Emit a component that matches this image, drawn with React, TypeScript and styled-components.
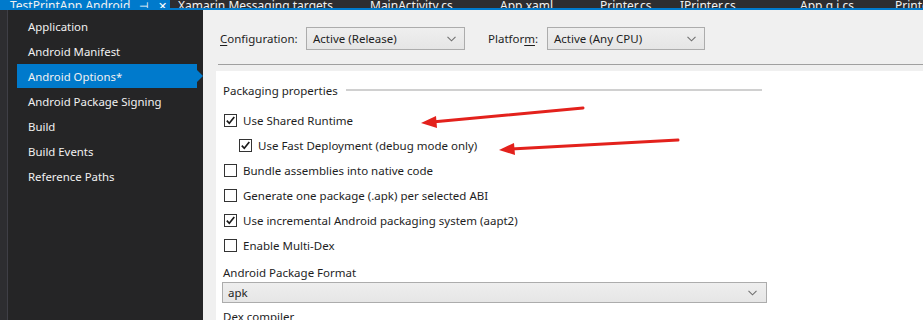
import React from "react";
import styled, { createGlobalStyle } from "styled-components";

const GlobalStyle = createGlobalStyle`
  html, body { margin: 0; padding: 0; background: #f0f0f0; }
  * { box-sizing: border-box; }
`;

const FONT = `"Segoe UI", "Noto Sans", "Open Sans", sans-serif`;

const Root = styled.div`
  position: relative;
  width: 923px;
  height: 320px;
  overflow: hidden;
  display: flex;
  flex-direction: column;
  font-family: ${FONT};
  font-size: 11.5px;
`;

const TabBar = styled.div`
  height: 8px;
  flex: none;
  background: #2d2d30;
  display: flex;
  align-items: flex-end;
  overflow: hidden;
`;

const Tab = styled.div<{ $active?: boolean; $w: number }>`
  flex: none;
  width: ${(p) => p.$w}px;
  height: 20px;
  display: flex;
  align-items: center;
  padding: 0 0 0 ${(p) => (p.$active ? 10 : 8)}px;
  color: #f1f1f1;
  background: ${(p) => (p.$active ? "#007acc" : "transparent")};
  font-size: 12px;
  white-space: nowrap;
  margin-bottom: -7px;
`;

const TabTitle = styled.span`
  width: 129px;
  flex: none;
`;

const TabIcon = styled.span`
  font-size: 11px;
  width: 19px;
  flex: none;
  color: #ffffff;
`;

const AccentLine = styled.div`
  height: 2px;
  flex: none;
  background: #007acc;
`;

const Body = styled.div`
  flex: 1;
  display: flex;
  min-height: 0;
`;

const Strip = styled.div`
  width: 8px;
  flex: none;
  background: #2d2d30;
  border-right: 1px solid #3f3f46;
`;

const Sidebar = styled.div`
  width: 195px;
  flex: none;
  background: #252526;
  padding-top: 4px;
  display: flex;
  flex-direction: column;
`;

const NavItem = styled.div<{ $selected?: boolean }>`
  position: relative;
  height: 25px;
  margin-left: 9px;
  width: 180px;
  padding-left: 11px;
  display: flex;
  align-items: center;
  color: #f1f1f1;
  font-size: 11.4px;
  background: ${(p) => (p.$selected ? "#007acc" : "transparent")};
  border-bottom: ${(p) => (p.$selected ? "1px solid #252526" : "none")};
  &::after {
    content: "";
    display: ${(p) => (p.$selected ? "block" : "none")};
    position: absolute;
    right: -6px;
    top: 6px;
    border-left: 6px solid #007acc;
    border-top: 6px solid transparent;
    border-bottom: 6px solid transparent;
  }
`;

const Content = styled.div`
  flex: 1;
  background: #f0f0f0;
  display: flex;
  flex-direction: column;
  min-width: 0;
`;

const ConfigRow = styled.div`
  display: flex;
  align-items: center;
  padding: 17px 0 0 17px;
  height: 40px;
  color: #1e1e1e;
`;

const ConfigLabel = styled.span<{ $w: number }>`
  width: ${(p) => p.$w}px;
  flex: none;
`;

const U = styled.span`
  text-decoration: underline;
  text-underline-offset: 2px;
`;

const Select = styled.div<{ $w: number; $h: number }>`
  width: ${(p) => p.$w}px;
  height: ${(p) => p.$h}px;
  flex: none;
  display: flex;
  align-items: center;
  justify-content: space-between;
  padding: 0 8px 0 6px;
  background: linear-gradient(#efefef, #e5e5e5);
  border: 1px solid #acacac;
  color: #1e1e1e;
`;

const Chevron = () => (
  <svg width="9" height="6" viewBox="0 0 9 6">
    <path d="M0.5 0.8 L4.5 4.8 L8.5 0.8" fill="none" stroke="#707070" strokeWidth="1.1" />
  </svg>
);

const Divider = styled.div`
  margin: 14px 0 0 15px;
  height: 1px;
  background: #a0a0a0;
  flex: none;
`;

const Panel = styled.div`
  margin: 6px 0 0 13px;
  flex: 1;
  background: #ffffff;
  padding: 10px 0 0 7px;
  color: #1e1e1e;
  display: flex;
  flex-direction: column;
`;

const GroupHeader = styled.div`
  display: flex;
  align-items: center;
  gap: 8px;
  height: 18px;
  width: 539px;
  margin-bottom: 9px;
  &::after {
    content: "";
    flex: 1;
    height: 2px;
    background: #d0d0d0;
  }
`;

const CheckRow = styled.div<{ $indent?: boolean }>`
  height: 25px;
  display: flex;
  align-items: center;
  gap: 6px;
  padding-left: ${(p) => (p.$indent ? 16 : 1)}px;
`;

const Box = styled.span`
  width: 13px;
  height: 13px;
  flex: none;
  border: 1px solid #333333;
  background: #ffffff;
  display: flex;
  align-items: center;
  justify-content: center;
`;

const Check = ({ checked }: { checked?: boolean }) => (
  <Box>
    {checked && (
      <svg width="11" height="11" viewBox="0 0 11 11">
        <path d="M1.8 5.6 L4.3 8.3 L9.3 2" fill="none" stroke="#1a1a1a" strokeWidth="1.7" />
      </svg>
    )}
  </Box>
);

const FieldLabel = styled.div<{ $top: number }>`
  height: 18px;
  display: flex;
  align-items: center;
  margin-top: ${(p) => p.$top}px;
`;

const FormatSelect = styled(Select)`
  margin: 1px 0 0 -1px;
  padding: 0 9px 0 5px;
  background: linear-gradient(#eeeeee, #e6e6e6);
`;

const Arrows = styled.svg`
  position: absolute;
  left: 0;
  top: 0;
  pointer-events: none;
`;

const tabs = [
  { t: "Xamarin.Messaging.targets", w: 192 },
  { t: "MainActivity.cs", w: 130 },
  { t: "App.xaml", w: 100 },
  { t: "Printer.cs", w: 80 },
  { t: "IPrinter.cs", w: 120 },
  { t: "App.g.i.cs", w: 95 },
  { t: "Printer", w: 60 },
];

const nav = [
  "Application",
  "Android Manifest",
  "Android Options*",
  "Android Package Signing",
  "Build",
  "Build Events",
  "Reference Paths",
];

const checks = [
  { t: "Use Shared Runtime", c: true },
  { t: "Use Fast Deployment (debug mode only)", c: true, i: true },
  { t: "Bundle assemblies into native code" },
  { t: "Generate one package (.apk) per selected ABI" },
  { t: "Use incremental Android packaging system (aapt2)", c: true },
  { t: "Enable Multi-Dex" },
];

export default function App() {
  return (
    <Root>
      <GlobalStyle />
      <TabBar>
        <Tab $active $w={170}>
          <TabTitle>TestPrintApp.Android</TabTitle>
          <TabIcon>⊣</TabIcon>
          <TabIcon>✕</TabIcon>
        </Tab>
        {tabs.map((x) => (
          <Tab key={x.t} $w={x.w}>
            {x.t}
          </Tab>
        ))}
      </TabBar>
      <AccentLine />
      <Body>
        <Strip />
        <Sidebar>
          {nav.map((n) => (
            <NavItem key={n} $selected={n === "Android Options*"}>
              {n}
            </NavItem>
          ))}
        </Sidebar>
        <Content>
          <ConfigRow>
            <ConfigLabel $w={86}>
              <U>C</U>onfiguration:
            </ConfigLabel>
            <Select $w={159} $h={23}>
              Active (Release)
              <Chevron />
            </Select>
            <ConfigLabel $w={59} style={{ marginLeft: 23 }}>
              Platfor<U>m</U>:
            </ConfigLabel>
            <Select $w={158} $h={23}>
              Active (Any CPU)
              <Chevron />
            </Select>
          </ConfigRow>
          <Divider />
          <Panel>
            <GroupHeader>Packaging properties</GroupHeader>
            {checks.map((c) => (
              <CheckRow key={c.t} $indent={c.i}>
                <Check checked={c.c} />
                {c.t}
              </CheckRow>
            ))}
            <FieldLabel $top={5}>Android Package Format</FieldLabel>
            <FormatSelect $w={545} $h={21}>
              apk
              <Chevron />
            </FormatSelect>
            <FieldLabel $top={4}>Dex compiler</FieldLabel>
          </Panel>
        </Content>
      </Body>
      <Arrows width="923" height="320" viewBox="0 0 923 320">
        <g stroke="#e3211c" strokeWidth="3" strokeLinecap="round" fill="#e3211c">
          <line x1="583" y1="108" x2="432" y2="122" />
          <polygon points="421,123 436,116 437,128" stroke="none" />
          <line x1="678" y1="140" x2="511" y2="149" />
          <polygon points="499,150 514,143 515,155" stroke="none" />
        </g>
      </Arrows>
    </Root>
  );
}
